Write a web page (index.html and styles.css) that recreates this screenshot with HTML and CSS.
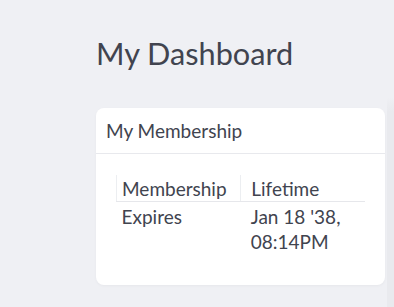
FILE: index.html
```html
<!DOCTYPE html>
<html>
<head>
    <meta name="viewport" content="width=device-width">
    <title>My Dashboard</title>
    <link rel="stylesheet" href="styles.css">
</head>
<body>
<div class="page">
    <div class="main">
        <h1 class="title">My Dashboard</h1>

        <div class="card">
            <div class="card-head">My Membership</div>
            <div class="card-body">
                <table class="info">
                    <tr>
                        <th>Membership</th>
                        <th>Lifetime</th>
                    </tr>
                    <tr>
                        <td>Expires</td>
                        <td>Jan 18 '38,<br>08:14PM</td>
                    </tr>
                </table>
            </div>
        </div>
    </div>
    <div class="side"></div>
</div>
</body>
</html>
```

FILE: styles.css
```css
html, body { margin: 0; }
body {
    background: #eff0f4;
    font-family: Lato, "Open Sans", sans-serif;
    color: #41444f;
}
.page {
    display: flex;
    padding: 35px 0 0 96px;
}
.main { width: 289px; }
.side {
    flex: 1;
    margin: 62px 0 0 2px;
    height: 220px;
    background: linear-gradient(#eff0f4, #e9eaee 14px);
}
.title {
    margin: 0 0 36px;
    font-size: 30.7px;
    font-weight: 400;
    line-height: 37px;
}
.card {
    background: #fff;
    border-radius: 8px;
    box-shadow: 0 1px 3px rgba(0, 0, 0, 0.04);
}
.card-head {
    padding: 10px;
    font-size: 19px;
    line-height: 25px;
    border-bottom: 1px solid #e8e9ed;
}
.card-body { padding: 21px 20px 31px; }
.info {
    width: 100%;
    border-collapse: collapse;
    font-size: 19px;
}
.info th, .info td {
    width: 50%;
    text-align: left;
    font-weight: 400;
    padding: 0 5px;
    line-height: 25px;
    vertical-align: top;
}
.info th {
    padding-top: 1px;
    border-bottom: 1px solid #e6e7eb;
    border-left: 1px solid #eceef1;
}
.info td { padding-top: 2px; }
.info th + th { padding-left: 10px; }
.info td + td { padding-left: 10px; }
```
